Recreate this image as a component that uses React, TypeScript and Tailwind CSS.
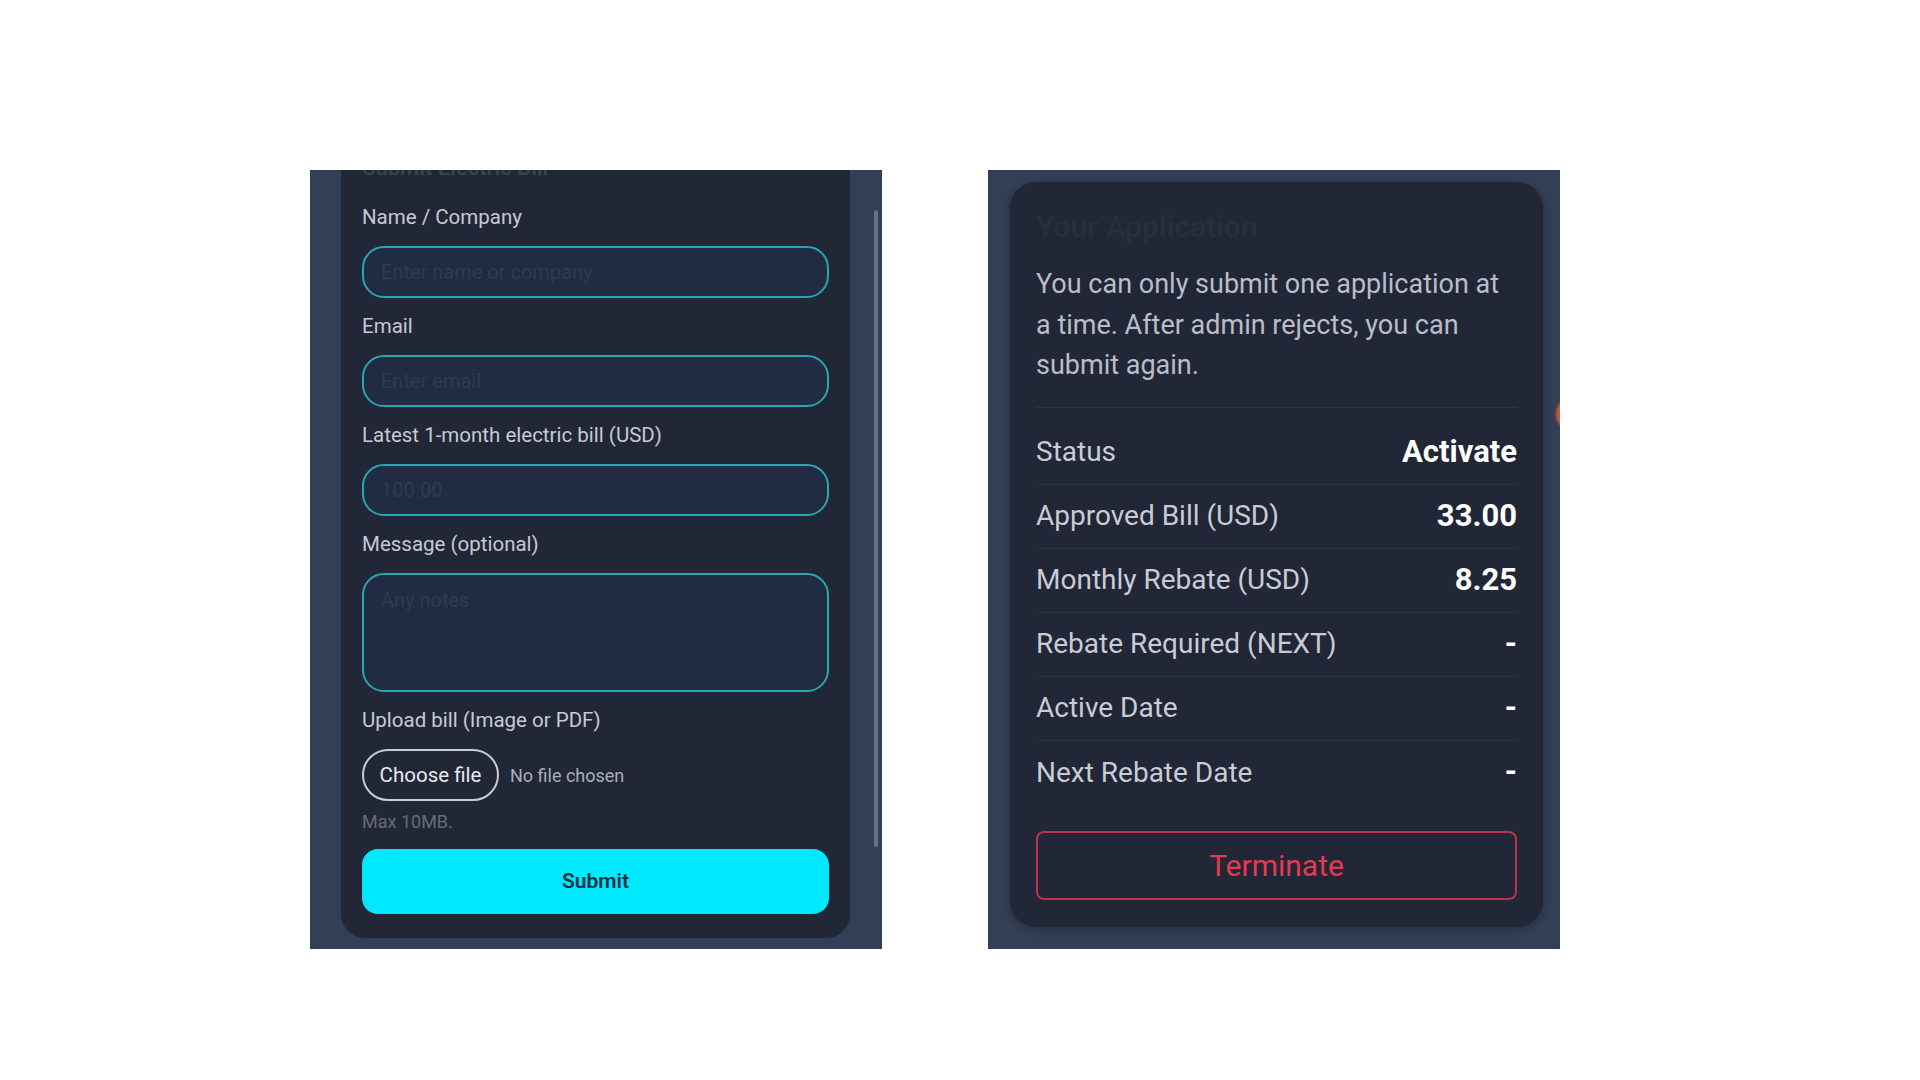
import React from "react";

const rows = [
  { label: "Status", value: "Activate" },
  { label: "Approved Bill (USD)", value: "33.00" },
  { label: "Monthly Rebate (USD)", value: "8.25" },
  { label: "Rebate Required (NEXT)", value: "-" },
  { label: "Active Date", value: "-" },
  { label: "Next Rebate Date", value: "-" },
];

function Field({ label, placeholder, first }: { label: string; placeholder: string; first?: boolean }) {
  return (
    <div className={`flex flex-col ${first ? "mt-[23px]" : "mt-[16px]"}`}>
      <label className="h-[24px] leading-[24px] text-[20.5px] text-[#c7cad2]">{label}</label>
      <input
        placeholder={placeholder}
        className="mt-[17px] h-[52px] w-full rounded-[22px] border-2 border-[#27a7ae] bg-[#222b44] px-[17px] text-[20px] text-[#c7cad2] outline-none placeholder:text-[#303950]"
      />
    </div>
  );
}

function SubmitForm() {
  return (
    <div className="relative h-[779px] w-[572px] overflow-hidden bg-[#333f56]">
      {/* scrolled card */}
      <div className="-mt-[40px] ml-[31px] flex w-[509px] flex-col rounded-[24px] bg-[#212736] px-[21px] pt-[24px] pb-[24px]">
        <h2 className="h-[28px] leading-[28px] text-[22px] font-semibold text-[#3a4252]">Submit Electric Bill</h2>

        <Field first label="Name / Company" placeholder="Enter name or company" />
        <Field label="Email" placeholder="Enter email" />
        <Field label="Latest 1-month electric bill (USD)" placeholder="100.00" />

        <div className="mt-[16px] flex flex-col">
          <label className="h-[24px] leading-[24px] text-[20.5px] text-[#c7cad2]">Message (optional)</label>
          <textarea
            placeholder="Any notes"
            className="mt-[17px] h-[119px] w-full resize-none rounded-[22px] border-2 border-[#27a7ae] bg-[#222b44] px-[17px] pt-[12px] leading-[26px] text-[20px] text-[#c7cad2] outline-none placeholder:text-[#303950]"
          />
        </div>

        <div className="mt-[16px] flex flex-col">
          <label className="h-[24px] leading-[24px] text-[20.5px] text-[#c7cad2]">Upload bill (Image or PDF)</label>
          <div className="mt-[17px] flex items-center gap-[11px]">
            <button className="h-[52px] w-[137px] rounded-full border-2 border-[#c9ccd3] text-[20.5px] text-[#e8e9ed]">
              Choose file
            </button>
            <span className="text-[18px] text-[#a9aeb9]">No file chosen</span>
          </div>
          <span className="mt-[11px] h-[20px] leading-[20px] text-[18px] text-[#666c7b]">Max 10MB.</span>
        </div>

        <button className="mt-[17px] h-[65px] w-full rounded-[16px] bg-[#00e9fc] text-[21px] font-semibold text-[#0f3344]">
          Submit
        </button>
      </div>

      {/* scrollbar */}
      <div className="absolute left-[564px] top-[40px] h-[637px] w-[4px] rounded-full bg-[#667086]" />
    </div>
  );
}

function ApplicationCard() {
  return (
    <div className="relative h-[779px] w-[572px] overflow-hidden bg-[#333f56]">
      <div className="ml-[22px] mt-[12px] flex w-[533px] flex-col rounded-[26px] bg-[#212736] px-[26px] pt-[27px] pb-[27px] shadow-[0_2px_10px_rgba(0,0,0,0.25)]">
        <h2 className="h-[36px] leading-[36px] text-[30px] font-semibold text-[#282e3d]">Your Application</h2>
        <p className="mt-[19px] border-b border-[#2c3344] pb-[21px] text-[27px] leading-[40.5px] text-[#babec8]">
          You can only submit one application at a time. After admin rejects, you can submit again.
        </p>

        <div className="mt-[13px] flex flex-col">
          {rows.map((r, i) => (
            <div
              key={r.label}
              className={`flex h-[64px] items-center justify-between ${i < rows.length - 1 ? "border-b border-[#2b3243]" : ""}`}
            >
              <span className="text-[28px] text-[#c9ccd4]">{r.label}</span>
              <span className="text-[31px] font-bold text-white">{r.value}</span>
            </div>
          ))}
        </div>

        <button className="mt-[26px] h-[69px] w-full rounded-[8px] border-2 border-[#b9334a] text-[30px] text-[#e23a50]">
          Terminate
        </button>
      </div>

      {/* floating button peeking in from the edge */}
      <div className="absolute left-[568px] top-[226px] h-[36px] w-[36px] rounded-full bg-[#c45a3c] blur-[1px]" />
    </div>
  );
}

export default function App() {
  return (
    <div className="min-h-screen w-full bg-white font-[Roboto,sans-serif]">
      <div className="flex items-start gap-[106px] pl-[310px] pt-[170px]">
        <SubmitForm />
        <ApplicationCard />
      </div>
    </div>
  );
}
